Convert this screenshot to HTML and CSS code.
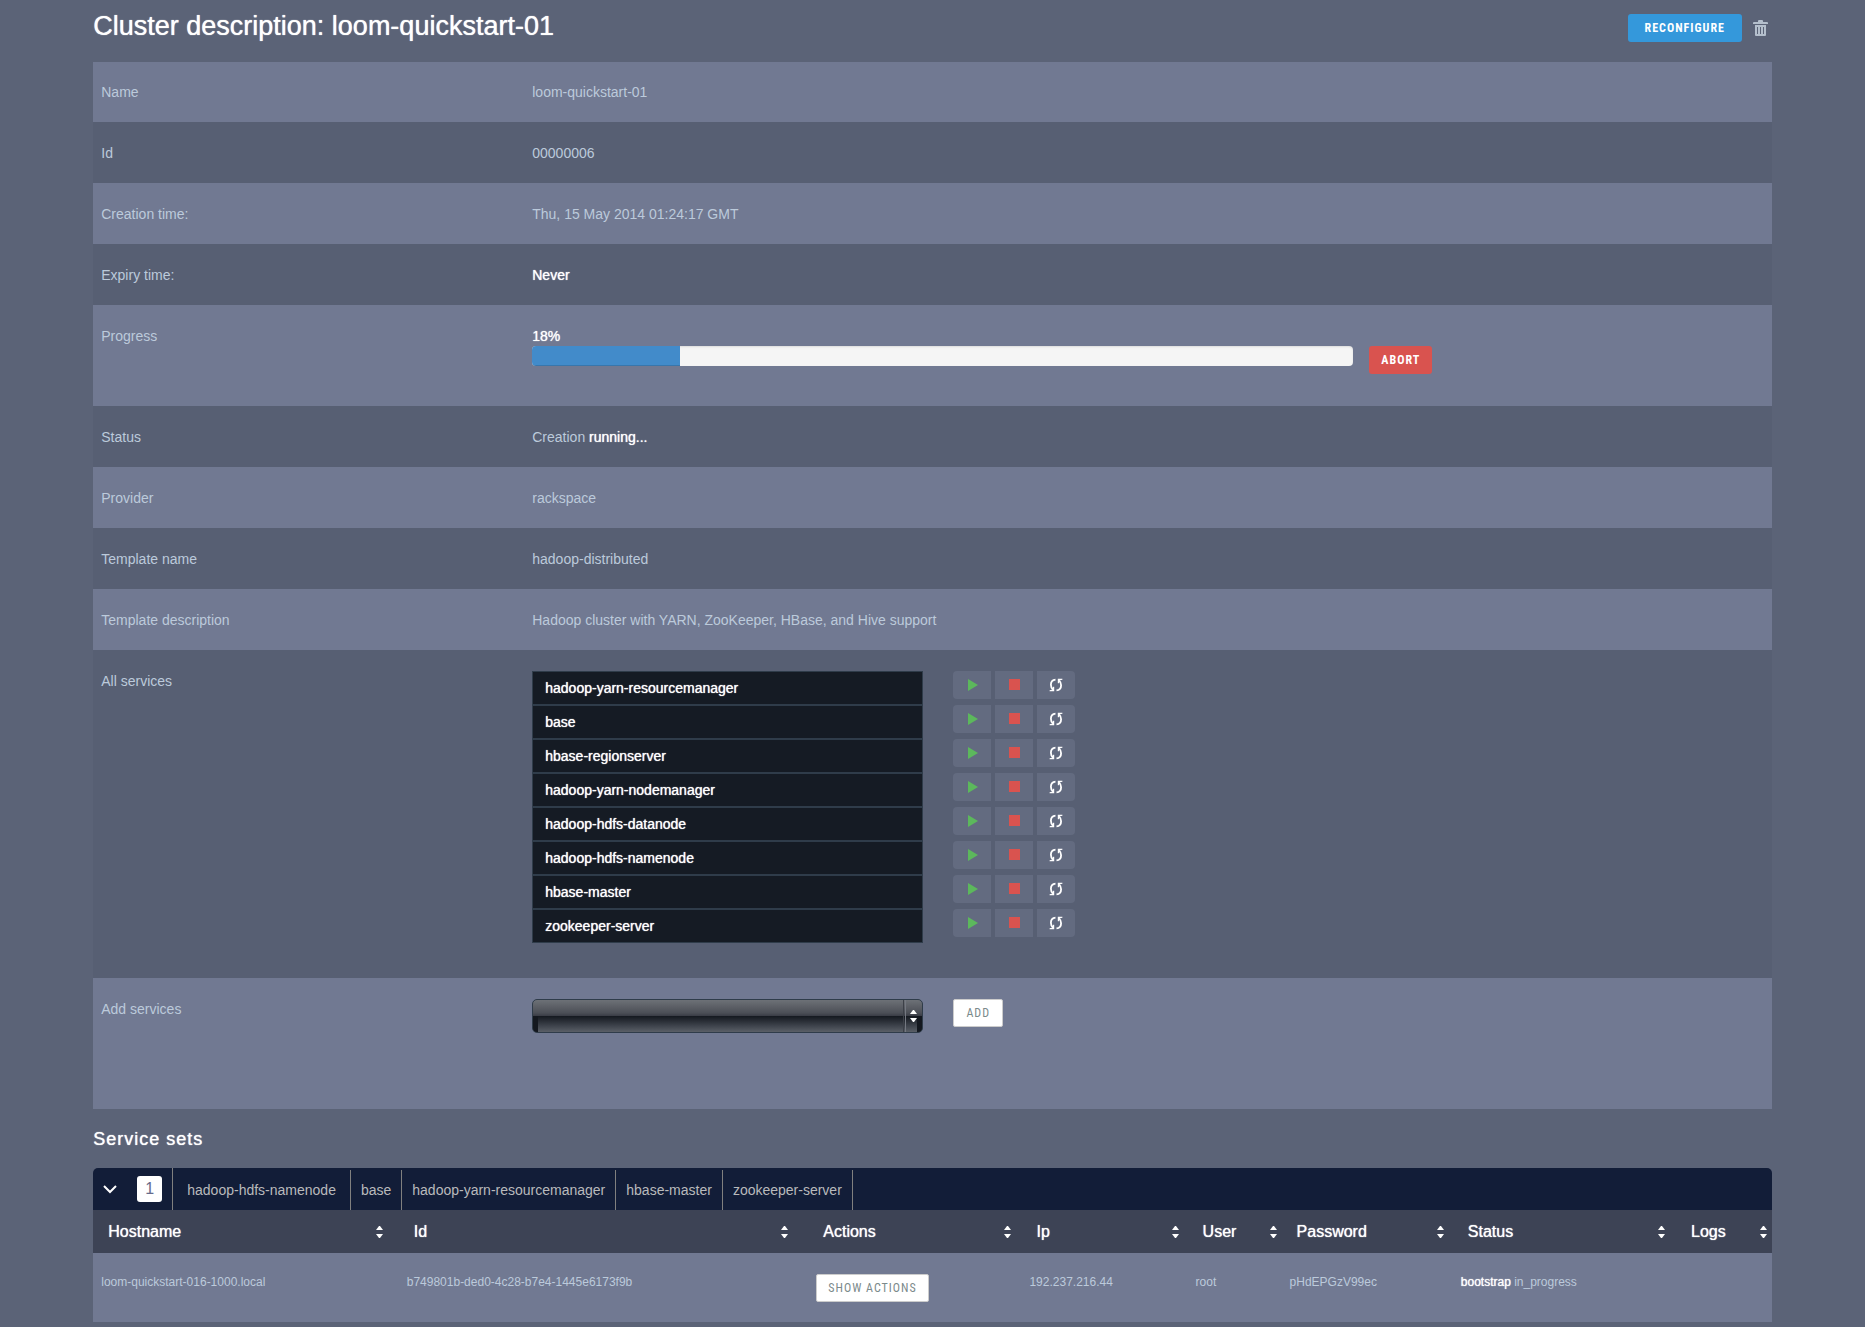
FILE: index.html
```html
<!DOCTYPE html>
<html lang="en">
<head>
<meta charset="utf-8">
<title>Cluster description: loom-quickstart-01</title>
<link rel="stylesheet" href="styles.css">
</head>
<body>
<svg class="sprite" aria-hidden="true">
  <symbol id="play" viewBox="0 0 14 14"><path d="M3 1l10 6-10 6z"/></symbol>
  <symbol id="stop" viewBox="0 0 14 14"><path d="M2 1h11v11H2z"/></symbol>
  <symbol id="refresh" viewBox="0 0 14 14"><path d="M6.500 1.600C3.400 1.900 1.900 4.300 1.900 6.800c0 2 .7 3.400 1.900 4.600M7.500 12.400c3.100-.3 4.600-2.700 4.600-5.200 0-2-.7-3.400-1.900-4.600" fill="none" stroke="currentColor" stroke-width="1.800"/><path d="M.6 13.300h4.600V8.700H4.200L3 11.700l-2.400.6zM13.400.7H8.800v4.600h1L11 2.300l2.400-.6z"/></symbol>
  <symbol id="sort" viewBox="0 0 7 12"><path d="M0 4h7L4 0H3zM0 8h7l-3 4H3z"/></symbol>
</svg>
<main class="page">
  <header class="page-head">
    <h1>Cluster description: loom-quickstart-01</h1>
    <div class="page-tools">
      <button class="btn btn-primary" type="button">RECONFIGURE</button>
      <button class="icon-btn" type="button" aria-label="Delete cluster">
        <svg width="15" height="16" viewBox="0 0 15 16"><path fill-rule="evenodd" d="M5 2V1q0-1 1-1h3q1 0 1 1v1h4q1 0 1 1v1H0V3q0-1 1-1zM2 5h11v10q0 1-1 1H3q-1 0-1-1zM4 7v7h1V7zM7 7v7h1V7zM10 7v7h1V7z"/></svg>
      </button>
    </div>
  </header>

  <table class="details">
    <tbody>
      <tr><th scope="row">Name</th><td>loom-quickstart-01</td></tr>
      <tr><th scope="row">Id</th><td>00000006</td></tr>
      <tr><th scope="row">Creation time:</th><td>Thu, 15 May 2014 01:24:17 GMT</td></tr>
      <tr><th scope="row">Expiry time:</th><td><span class="strong">Never</span></td></tr>
      <tr>
        <th scope="row">Progress</th>
        <td>
          <div class="strong">18%</div>
          <div class="progress-line">
            <div class="progress" role="progressbar" aria-label="Progress" aria-valuenow="18" aria-valuemin="0" aria-valuemax="100"><div class="progress-bar" style="width: 18%"></div></div>
            <button class="btn btn-danger" type="button">ABORT</button>
          </div>
        </td>
      </tr>
      <tr><th scope="row">Status</th><td>Creation <span class="strong">running...</span></td></tr>
      <tr><th scope="row">Provider</th><td>rackspace</td></tr>
      <tr><th scope="row">Template name</th><td>hadoop-distributed</td></tr>
      <tr><th scope="row">Template description</th><td>Hadoop cluster with YARN, ZooKeeper, HBase, and Hive support</td></tr>
      <tr>
        <th scope="row">All services</th>
        <td>
          <ul class="services">
            <li><span class="service strong">hadoop-yarn-resourcemanager</span><span class="controls"><button type="button" class="start" aria-label="Start"><svg><use href="#play"/></svg></button><button type="button" class="halt" aria-label="Stop"><svg><use href="#stop"/></svg></button><button type="button" aria-label="Restart"><svg><use href="#refresh"/></svg></button></span></li>
            <li><span class="service strong">base</span><span class="controls"><button type="button" class="start" aria-label="Start"><svg><use href="#play"/></svg></button><button type="button" class="halt" aria-label="Stop"><svg><use href="#stop"/></svg></button><button type="button" aria-label="Restart"><svg><use href="#refresh"/></svg></button></span></li>
            <li><span class="service strong">hbase-regionserver</span><span class="controls"><button type="button" class="start" aria-label="Start"><svg><use href="#play"/></svg></button><button type="button" class="halt" aria-label="Stop"><svg><use href="#stop"/></svg></button><button type="button" aria-label="Restart"><svg><use href="#refresh"/></svg></button></span></li>
            <li><span class="service strong">hadoop-yarn-nodemanager</span><span class="controls"><button type="button" class="start" aria-label="Start"><svg><use href="#play"/></svg></button><button type="button" class="halt" aria-label="Stop"><svg><use href="#stop"/></svg></button><button type="button" aria-label="Restart"><svg><use href="#refresh"/></svg></button></span></li>
            <li><span class="service strong">hadoop-hdfs-datanode</span><span class="controls"><button type="button" class="start" aria-label="Start"><svg><use href="#play"/></svg></button><button type="button" class="halt" aria-label="Stop"><svg><use href="#stop"/></svg></button><button type="button" aria-label="Restart"><svg><use href="#refresh"/></svg></button></span></li>
            <li><span class="service strong">hadoop-hdfs-namenode</span><span class="controls"><button type="button" class="start" aria-label="Start"><svg><use href="#play"/></svg></button><button type="button" class="halt" aria-label="Stop"><svg><use href="#stop"/></svg></button><button type="button" aria-label="Restart"><svg><use href="#refresh"/></svg></button></span></li>
            <li><span class="service strong">hbase-master</span><span class="controls"><button type="button" class="start" aria-label="Start"><svg><use href="#play"/></svg></button><button type="button" class="halt" aria-label="Stop"><svg><use href="#stop"/></svg></button><button type="button" aria-label="Restart"><svg><use href="#refresh"/></svg></button></span></li>
            <li><span class="service strong">zookeeper-server</span><span class="controls"><button type="button" class="start" aria-label="Start"><svg><use href="#play"/></svg></button><button type="button" class="halt" aria-label="Stop"><svg><use href="#stop"/></svg></button><button type="button" aria-label="Restart"><svg><use href="#refresh"/></svg></button></span></li>
          </ul>
        </td>
      </tr>
      <tr>
        <th scope="row"><label for="add-service">Add services</label></th>
        <td>
          <div class="add-line">
            <div class="select-box">
              <select id="add-service"><option></option></select>
              <svg class="select-arrows" width="7" height="12"><use href="#sort"/></svg>
            </div>
            <button class="btn btn-default" type="button">ADD</button>
          </div>
        </td>
      </tr>
    </tbody>
  </table>

  <h2>Service sets</h2>
  <section class="set">
    <div class="set-head">
      <button class="set-toggle" type="button" aria-label="Collapse service set">
        <svg width="14" height="9" viewBox="0 0 14 9"><path d="M1 1l6 6 6-6" fill="none" stroke="currentColor" stroke-width="2"/></svg>
      </button>
      <span class="set-count">1</span>
      <ul class="set-services">
        <li>hadoop-hdfs-namenode</li>
        <li>base</li>
        <li>hadoop-yarn-resourcemanager</li>
        <li>hbase-master</li>
        <li>zookeeper-server</li>
      </ul>
    </div>
    <table class="nodes">
      <colgroup><col class="c-host"><col class="c-id"><col class="c-actions"><col class="c-ip"><col class="c-user"><col class="c-password"><col class="c-status"><col class="c-logs"></colgroup>
      <thead>
        <tr>
          <th scope="col"><button type="button">Hostname<svg width="7" height="12"><use href="#sort"/></svg></button></th>
          <th scope="col"><button type="button">Id<svg width="7" height="12"><use href="#sort"/></svg></button></th>
          <th scope="col"><button type="button">Actions<svg width="7" height="12"><use href="#sort"/></svg></button></th>
          <th scope="col"><button type="button">Ip<svg width="7" height="12"><use href="#sort"/></svg></button></th>
          <th scope="col"><button type="button">User<svg width="7" height="12"><use href="#sort"/></svg></button></th>
          <th scope="col"><button type="button">Password<svg width="7" height="12"><use href="#sort"/></svg></button></th>
          <th scope="col"><button type="button">Status<svg width="7" height="12"><use href="#sort"/></svg></button></th>
          <th scope="col"><button type="button">Logs<svg width="7" height="12"><use href="#sort"/></svg></button></th>
        </tr>
      </thead>
      <tbody>
        <tr>
          <td>loom-quickstart-016-1000.local</td>
          <td>b749801b-ded0-4c28-b7e4-1445e6173f9b</td>
          <td><button class="btn btn-default" type="button">SHOW ACTIONS</button></td>
          <td>192.237.216.44</td>
          <td>root</td>
          <td>pHdEPGzV99ec</td>
          <td><span class="strong">bootstrap</span> in_progress</td>
          <td></td>
        </tr>
      </tbody>
    </table>
  </section>
</main>
</body>
</html>
```
FILE: styles.css
```css
* { box-sizing: border-box; }

body {
  margin: 0;
  background: #5b6377;
  color: #bccadb;
  font: 14px/20px "Liberation Sans", Arial, sans-serif;
}

button { font: inherit; color: inherit; cursor: pointer; }
ul { list-style: none; margin: 0; padding: 0; }
svg { display: block; fill: currentColor; }
.sprite { display: none; }

.page { margin: 0 5%; }

/* medium weight: regular outlines thickened by a tight shadow */
.strong, h1, h2, .nodes th {
  color: #fff;
  text-shadow: 0 0 1px #fff;
}

/* page heading */
.page-head {
  display: flex;
  justify-content: space-between;
  align-items: flex-start;
  height: 62px;
  padding-top: 14px;
}
h1 { margin: 0; font-size: 27px; font-weight: 400; line-height: 24px; }
h2 { margin: 20px 0 19px; font-size: 18px; font-weight: 400; line-height: 20px; letter-spacing: 1px; }
.page-tools { display: flex; align-items: center; gap: 11px; padding-right: 4px; }
.icon-btn { padding: 0; border: 0; background: none; color: #b4bfcc; }

/* buttons */
.btn {
  display: block;
  height: 28px;
  min-width: 50px;
  padding: 0 11px;
  border: 1px solid transparent;
  border-radius: 3px;
  font: 12px/20px "Liberation Sans Narrow", "Roboto Condensed", "DejaVu Sans Condensed", sans-serif;
  letter-spacing: 1px;
  white-space: nowrap;
}
.btn-primary { min-width: 114px; background: #3498db; color: #fff; font-weight: 700; }
.btn-danger { background: #d9534f; color: #fff; font-weight: 700; }
.btn-default { border-color: #ccc; border-radius: 2px; background: #fff; color: #7b8a8b; }

/* cluster details */
.details { width: 100%; border-collapse: collapse; table-layout: fixed; }
.details th, .details td {
  padding: 21px 8px 20px;
  text-align: left;
  vertical-align: top;
  font-weight: 400;
}
.details th { width: 431px; }
.details tr:first-child > * { padding-top: 20px; }
.details tr { background: #575f73; }
.details tr:nth-child(odd) { background: #717992; }

.progress-line { display: flex; align-items: flex-start; gap: 16px; margin-bottom: 12px; }
.progress {
  flex: 0 0 66.67%;
  height: 20px;
  overflow: hidden;
  border-radius: 4px;
  background: #f5f5f5;
  box-shadow: inset 0 1px 2px rgba(0, 0, 0, .1);
}
.progress-bar { height: 100%; background: #428bca; box-shadow: inset 0 -1px 0 rgba(0, 0, 0, .15); }

.services { margin-bottom: 15px; }
.services li, .add-line { display: flex; align-items: flex-start; gap: 30px; }
.service, .select-box { flex: 0 0 391px; height: 34px; }
.service {
  padding: 6px 12px;
  border: 1px solid #2f3c4a;
  background: #151b24;
}
.controls { display: flex; gap: 4px; }
.controls button {
  display: flex;
  align-items: center;
  justify-content: center;
  width: 38px;
  height: 28px;
  padding: 0;
  border: 0;
  background: #636b80;
  color: #fff;
}
.controls button:first-child { border-radius: 4px 0 0 4px; }
.controls button:last-child { border-radius: 0 4px 4px 0; }
.controls svg { width: 14px; height: 14px; }
.controls .start { color: #5cb85c; }
.controls .halt { color: #d9534f; }

.add-line { margin-bottom: 56px; }
.select-box { position: relative; }
.select-box select {
  display: block;
  width: 100%;
  height: 34px;
  appearance: none;
  border: 1px solid #2f3c4a;
  border-radius: 5px;
  background:
    linear-gradient(#14181f, #14181f) left bottom / 5px 16px no-repeat,
    linear-gradient(#14181f, #14181f) right bottom / 5px 16px no-repeat,
    linear-gradient(#747881, #747881) right 16px top / 1px 100% no-repeat,
    linear-gradient(#3c4048, #3c4048) right 18px top / 1px 100% no-repeat,
    linear-gradient(#6d7177, #4c4f57 40%, #393c45 50%, #14181f 50%, #3d424b 80%, #5a5f67);
}
.select-arrows { position: absolute; right: 6px; top: 11px; color: #fff; pointer-events: none; }

/* service set */
.set-head {
  display: flex;
  align-items: center;
  height: 42px;
  padding-left: 10px;
  border-radius: 5px 5px 0 0;
  background: #121d38;
}
.set-toggle { padding: 0; border: 0; background: none; color: #fff; }
.set-count {
  width: 25px;
  margin: 0 10px 0 20px;
  border-radius: 3px;
  background: #fff;
  color: #666b8c;
  font-size: 16px;
  line-height: 26px;
  text-align: center;
}
.set-services { display: flex; align-self: stretch; border-left: 1px solid #80807f; color: #b9babc; }
.set-services li {
  margin-top: 2px;
  padding: 10px;
  border-right: 1px solid #80807f;
}
.set-services li:first-child { padding: 10px 14px; }

.nodes { width: 100%; border-collapse: collapse; table-layout: fixed; font-size: 12px; }
.c-host { width: 18.2%; }
.c-id { width: 24.4%; }
.c-actions { width: 12.7%; }
.c-ip { width: 9.9%; }
.c-user { width: 5.6%; }
.c-password { width: 10.2%; }
.c-status { width: 13.3%; }
.c-logs { width: 5.7%; }
.nodes th { padding: 0; background: #3d4355; font-size: 16px; font-weight: 400; }
.nodes th button {
  display: flex;
  align-items: center;
  justify-content: space-between;
  width: 100%;
  height: 43px;
  padding: 0 5% 0 15px;
  border: 0;
  background: none;
  text-shadow: inherit;
}
.nodes td {
  padding: 21px 8px 20px;
  background: #717992;
  line-height: 17px;
  vertical-align: top;
}
```
